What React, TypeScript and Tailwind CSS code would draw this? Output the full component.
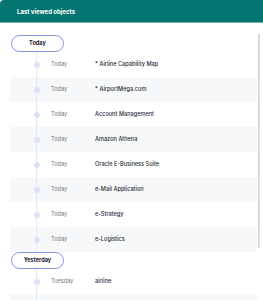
import React from "react";

type Row = { date: string; name: string };

const today: Row[] = [
  { date: "Today", name: "* Airline Capability Map" },
  { date: "Today", name: "* AirportMega.com" },
  { date: "Today", name: "Account Management" },
  { date: "Today", name: "Amazon Athena" },
  { date: "Today", name: "Oracle E-Business Suite" },
  { date: "Today", name: "e-Mail Application" },
  { date: "Today", name: "e-Strategy" },
  { date: "Today", name: "e-Logistics" },
];

const yesterday: Row[] = [
  { date: "Tuesday", name: "airline" },
  { date: "", name: "" },
];

function Pill({ label }: { label: string }) {
  return (
    <div className="ml-[1px] flex h-[17px] w-[53px] items-center justify-center rounded-full border border-[#8593e4] text-[5.6px] font-bold text-[#1f2233]">
      {label}
    </div>
  );
}

function TimelineRow({ row, striped }: { row: Row; striped: boolean }) {
  return (
    <div className={`flex h-[25px] items-center ${striped ? "bg-[#f7f8fa]" : "bg-white"}`}>
      <div className="relative flex h-full w-[41px] shrink-0 items-center">
        <div className="absolute inset-y-0 left-[26px] w-px bg-[#e4e7f7]" />
        <div className="relative ml-[24px] h-[6px] w-[6px] rounded-full bg-[#dde2fb]" />
      </div>
      <div className="w-[44px] shrink-0 text-[5.6px] text-[#77777b]">{row.date}</div>
      <div className="text-[5.6px] font-medium text-[#2b2d38]">{row.name}</div>
    </div>
  );
}

export default function App() {
  return (
    <div
      className="h-[300px] w-[263px] overflow-hidden bg-white"
      style={{ fontFamily: "Inter, 'Noto Sans', sans-serif" }}
    >
      <div className="flex h-[23px] items-center rounded-tl-[4px] border-b border-[#6fb1ae] bg-[#047571] pl-[17px] text-[6px] font-bold text-white">
        Last viewed objects
      </div>
      <div className="flex">
        <div className="flex-1 pl-[10px] pt-[12px]">
          <Pill label="Today" />
          {today.map((r, i) => (
            <TimelineRow key={i} row={r} striped={i % 2 === 1} />
          ))}
          <Pill label="Yesterday" />
          {yesterday.map((r, i) => (
            <TimelineRow key={i} row={r} striped={i % 2 === 1} />
          ))}
        </div>
        <div className="ml-[1px] mr-[3px] mt-[11px] h-[214px] w-[2px] bg-[#dadada]" />
      </div>
    </div>
  );
}
